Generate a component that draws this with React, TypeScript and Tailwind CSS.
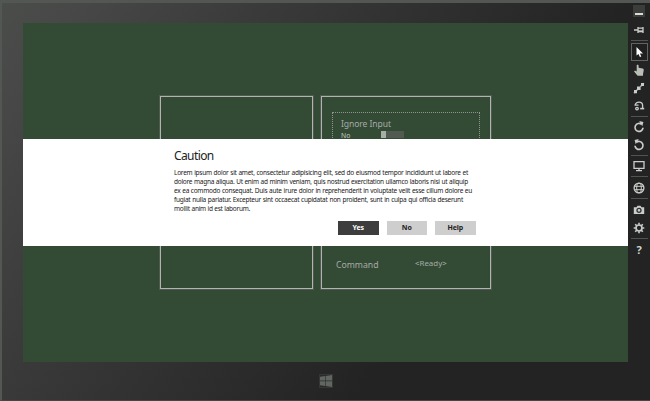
import React from "react";

const BODY = [
  { text: "Lorem ipsum dolor sit amet, consectetur adipisicing elit, sed do eiusmod tempor incididunt ut labore et", width: "w-[294px]" },
  { text: "dolore magna aliqua. Ut enim ad minim veniam, quis nostrud exercitation ullamco laboris nisi ut aliquip", width: "w-[294px]" },
  { text: "ex ea commodo consequat. Duis aute irure dolor in reprehenderit in voluptate velit esse cillum dolore eu", width: "w-[298px]" },
  { text: "fugiat nulla pariatur. Excepteur sint occaecat cupidatat non proident, sunt in culpa qui officia deserunt", width: "w-[289px]" },
  { text: "mollit anim id est laborum.", width: "w-[76px]" },
];

function Icon({ children }: { children: React.ReactNode }) {
  return (
    <svg width="12" height="12" viewBox="0 0 12 12" fill="none" stroke="#c9cdc9" strokeWidth="1.3">
      {children}
    </svg>
  );
}

function Slot({ children, tall }: { children: React.ReactNode; tall?: boolean }) {
  return <div className={`flex w-full shrink-0 items-center justify-center ${tall ? "h-[19px]" : "h-[18px]"}`}>{children}</div>;
}

function Rule() {
  return <div className="my-[1px] h-px w-[17px] shrink-0 bg-[#505450]" />;
}

function Toolbar() {
  return (
    <div className="flex w-[22px] shrink-0 flex-col items-center bg-[#232323]">
      <div className="mt-[2px] flex h-[12px] w-[12px] shrink-0 items-end justify-center bg-[#3b3d3b] pb-[2px]">
        <div className="h-[2px] w-[8px] bg-[#d8dbd8]" />
      </div>
      <div className="mt-[3px] flex h-[19px] shrink-0 items-center">
        <Icon>
          <path d="M1 6H5M5 3v6M5 4.2h5M5 7.4h5M10 3v6" strokeWidth="1.3" />
          <path d="M5 7.4h5" strokeWidth="1.8" />
        </Icon>
      </div>
      <div className="mt-[1px] h-px w-[17px] shrink-0 bg-[#505450]" />
      <div className="mt-[2px] flex h-[18px] w-[17px] shrink-0 items-center justify-center border border-[#606560] bg-[#202020]">
        <Icon>
          <path d="M3.5 1v8.6l2-1.7 1.4 3.2 1.4-.6-1.4-3H10z" fill="#fff" stroke="none" />
        </Icon>
      </div>
      <Slot>
        <Icon>
          <path d="M4.5.8c.8 0 1.1.4 1.1 1v2l4 .8c1.1.3 1.2 1 1.1 2L10 10v1.7H4.6L1.3 7.8c-.4-.8.4-1.4 1.2-1l1.2.8V2c0-.7.1-1.2.8-1.2z" fill="#b9beb9" stroke="none" />
        </Icon>
      </Slot>
      <Slot>
        <Icon>
          <path d="M1 11l10-10" strokeDasharray="2 1" />
          <path d="M4 4.4h3.6V8H4zM8 .9h3v3.2H8zM1 8h3v3.2H1z" fill="#c9cdc9" stroke="none" />
        </Icon>
      </Slot>
      <Slot>
        <Icon>
          <path d="M2.2 5.5C2.2 3 4 2.2 6 2.2s3.6 1 3.6 3.2v3M1.5 5.2h4" />
          <circle cx="4" cy="8.6" r="1.3" />
          <path d="M7.2 8.6h4" strokeWidth="1.6" />
        </Icon>
      </Slot>
      <Rule />
      <Slot>
        <Icon>
          <path d="M8.6 3.4A4 4 0 1 0 10 6.8" strokeWidth="1.7" />
          <path d="M6.2 0l4.2 1-1.1 4.2z" fill="#c9cdc9" stroke="none" />
        </Icon>
      </Slot>
      <Slot>
        <Icon>
          <path d="M3.4 3.4A4 4 0 1 1 2 6.8" strokeWidth="1.7" />
          <path d="M5.8 0L1.6 1l1.1 4.2z" fill="#c9cdc9" stroke="none" />
        </Icon>
      </Slot>
      <Rule />
      <Slot>
        <Icon>
          <path d="M1 1.7h10v6.6H1zM6 8v2.5M3 10.7h6" />
        </Icon>
      </Slot>
      <Rule />
      <Slot tall>
        <Icon>
          <circle cx="6" cy="6" r="4.9" />
          <ellipse cx="6" cy="6" rx="2.3" ry="4.8" strokeWidth="1" />
          <path d="M1.5 4.3h9M1.5 7.7h9" strokeWidth="1" />
        </Icon>
      </Slot>
      <Rule />
      <Slot tall>
        <Icon>
          <path d="M.8 3.2h2.7l1-1.5h3l1 1.5h2.7V10H.8z" fill="#c9cdc9" stroke="none" />
          <circle cx="6" cy="6.3" r="2" stroke="#303230" />
        </Icon>
      </Slot>
      <Slot>
        <Icon>
          <circle cx="6" cy="6" r="3" strokeWidth="1.7" />
          <path d="M6 .7v2M6 9.3v2M.7 6h2M9.3 6h2M2.2 2.2l1.5 1.5M8.3 8.3l1.5 1.5M2.2 9.8l1.5-1.5M8.3 3.7l1.5-1.5" strokeWidth="1.6" />
        </Icon>
      </Slot>
      <Rule />
      <Slot>
        <span className="text-[11px] leading-none font-bold text-[#d0d4d0]">?</span>
      </Slot>
    </div>
  );
}

function DialogButton({ label, primary }: { label: string; primary?: boolean }) {
  return (
    <button className={`flex h-[14px] w-[40.5px] items-center justify-center text-[7px] leading-none font-bold tracking-[-0.1px] ${primary ? "bg-[#3c3d3c] text-white" : "bg-[#cecece] text-[#222]"}`}>
      {label}
    </button>
  );
}

function Dialog() {
  return (
    <div className="absolute inset-x-0 top-[116px] h-[107px] bg-white pl-[151px] text-[#222]">
      <h1 className="mt-[9px] text-[12px] leading-[16px] tracking-[-0.6px]">Caution</h1>
      <div className="mt-[5.4px] text-[6.5px] leading-[8.8px] tracking-[-0.25px] text-[#1a1a1a]">
        {BODY.map((line) => (
          <p key={line.text} className={`whitespace-nowrap [text-align-last:justify] ${line.width}`}>{line.text}</p>
        ))}
      </div>
      <div className="mt-[7.6px] ml-[164px] flex gap-[8px]">
        <DialogButton label="Yes" primary />
        <DialogButton label="No" />
        <DialogButton label="Help" />
      </div>
    </div>
  );
}

export default function App() {
  return (
    <div className="flex h-[401px] w-[650px] flex-col overflow-hidden border-t-[3px] border-b border-l-[2px] border-t-[#535753] border-b-[#454745] border-l-[#535753] bg-[linear-gradient(125deg,#4b4d4b_0%,#3c3b3c_27%,#232323_68%)] font-['Noto_Sans','Open_Sans',sans-serif]">
      <div className="flex h-[359px] shrink-0 justify-end">
        <div className="relative mt-[20px] h-[339px] w-[605px] bg-[#334a35]">
          <div className="flex gap-[8px] pt-[73px] pl-[137px]">
            <div className="h-[193px] w-[153px] border border-[#b0b3b0] outline outline-[#4f5b50]" />
            <div className="flex h-[193px] w-[170px] flex-col justify-between border border-[#b0b3b0] text-[#a5aaa5] outline outline-[#4f5b50]">
              <div className="mt-[15px] ml-[10px] h-[60px] w-[148px] border border-dotted border-[#8f968f] pl-[8px]">
                <div className="mt-[5px] text-[8.6px] leading-[13px] tracking-[-0.1px]">Ignore Input</div>
                <div className="flex text-[6.8px] leading-[9px] text-[#c5c8c5]">
                  <span className="w-[40px]">No</span>
                  <span className="h-[7px] w-[23px] border-l-[5px] border-[#a8aea8] bg-[#505a51]" />
                </div>
              </div>
              <div className="mb-[16px] flex pl-[14px] leading-[14px]">
                <span className="w-[79px] pt-[1px] text-[8.7px]">Command</span>
                <span className="text-[7.9px] leading-[12px]">&lt;Ready&gt;</span>
              </div>
            </div>
          </div>
          <Dialog />
        </div>
        <Toolbar />
      </div>
      <div className="flex flex-1 items-center justify-center">
        <div className="flex h-[14px] w-[14px] items-center justify-center border border-[#353735] bg-[#292b29]">
          <svg width="12" height="12" viewBox="0 0 12 12" fill="#626662">
            <path d="M0 1.7L5.2 1v4.6H0zM5.8.9L12 0v5.6H5.8zM0 6.2h5.2V11L0 10.2zM5.8 6.2H12V12l-6.2-.9z" />
          </svg>
        </div>
      </div>
    </div>
  );
}
